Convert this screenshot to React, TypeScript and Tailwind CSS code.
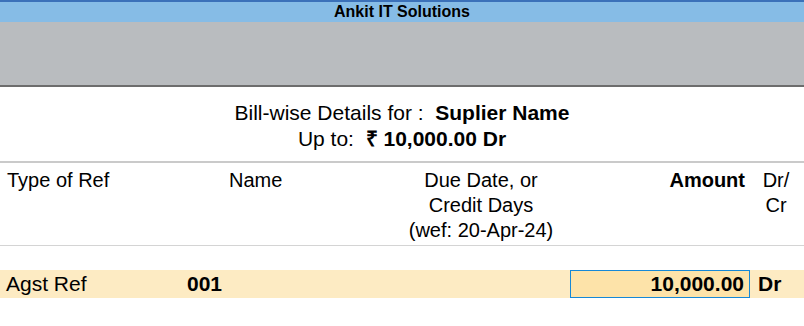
import React from "react";

export default function App() {
  return (
    <div
      className="w-[804px] h-[326px] bg-white text-black overflow-hidden"
      style={{ fontFamily: '"Liberation Sans", Arial, sans-serif' }}
    >
      <div className="h-[2px] bg-[#3b71b9]" />
      <div className="h-[20px] bg-[#86bce6] text-center font-bold text-[16px] leading-[20px]">
        Ankit IT Solutions
      </div>
      <div className="h-[63px] bg-[#b9bcbf]" />
      <div className="h-[2px] bg-[#6d6d6d]" />

      <div className="pt-[13px] pb-[9px] text-center text-[21px] leading-[26px]">
        <div>
          Bill-wise Details for :&nbsp; <span className="font-bold">Suplier Name</span>
        </div>
        <div>
          Up to:&nbsp; <span className="font-bold">₹ 10,000.00 Dr</span>
        </div>
      </div>
      <div className="h-[2px] bg-[#cacaca]" />

      <div className="flex pt-[5px] pb-[2px] text-[20px] leading-[25px]">
        <div className="w-[222px] pl-[7px]">Type of Ref</div>
        <div className="w-[180px] pl-[7px]">Name</div>
        <div className="w-[158px] text-center">
          <div>Due Date, or</div>
          <div>Credit Days</div>
          <div>(wef: 20-Apr-24)</div>
        </div>
        <div className="w-[188px] pr-[3px] text-right font-bold">Amount</div>
        <div className="w-[56px] text-center">
          <div>Dr/</div>
          <div>Cr</div>
        </div>
      </div>
      <div className="h-px bg-[#d4d4d4]" />

      <div className="mt-[24px] flex items-stretch h-[28px] bg-[#fdebc3] text-[21px] leading-[26px]">
        <div className="w-[187px] pl-[6px] leading-[28px]">Agst Ref</div>
        <div className="w-[383px] font-bold leading-[28px]">001</div>
        <div className="w-[180px] border border-[#1688d6] bg-[#fde3a9] text-right pr-[5px] font-bold">
          10,000.00
        </div>
        <div className="pl-[8px] font-bold leading-[28px]">Dr</div>
      </div>
    </div>
  );
}
